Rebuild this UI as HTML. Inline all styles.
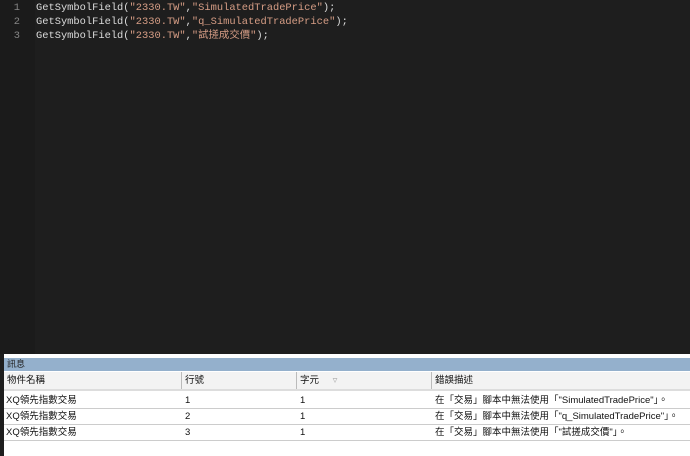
<!DOCTYPE html><html><head><meta charset="utf-8"><style>
body{margin:0;width:690px;height:456px;overflow:hidden;background:#1e1e1e;position:relative;font-family:"Liberation Sans","Noto Sans CJK TC",sans-serif}
.gut{position:absolute;left:0;top:0;width:35px;height:354px;background:#1b1b1b}
.code{position:absolute;left:0;top:1px;font:10.4px/14px "Liberation Mono","Noto Sans CJK TC",monospace;color:#dcdcdc}
.ln{display:inline-block;width:20px;text-align:right;color:#858585;margin-right:16px}
.s{color:#d69d85}
.panel{position:absolute;left:4px;top:354px;width:686px;height:102px;background:#fff}
.title{position:absolute;left:0;top:4px;width:686px;height:13px;background:#94b0cc;font-size:9px;line-height:13px;color:#222;padding-left:3px}
.row{position:absolute;left:0;width:686px;height:15px;font-size:9.5px;line-height:15px;color:#111;border-bottom:1px solid #ccc}
.row span{position:absolute;top:0}
.hd{background:#f3f3f3;height:17px;line-height:17px;border-bottom:2px solid #ddd}
.hd span{border-left:1px solid #bbb;padding-left:3px}
</style></head><body>
<div class="gut"></div>
<div class="code">
<div><span class="ln">1</span>GetSymbolField(<span class="s">"2330.TW"</span>,<span class="s">"SimulatedTradePrice"</span>);</div>
<div><span class="ln">2</span>GetSymbolField(<span class="s">"2330.TW"</span>,<span class="s">"q_SimulatedTradePrice"</span>);</div>
<div><span class="ln">3</span>GetSymbolField(<span class="s">"2330.TW"</span>,<span class="s">"試搓成交價"</span>);</div>
</div>
<div class="panel">
<div class="title">訊息</div>
<div class="row hd" style="top:18px"><span style="left:0;border:0">物件名稱</span><span style="left:177px">行號</span><span style="left:292px">字元 <span style="position:static;color:#aaa;border:0;margin-left:8px">▿</span></span><span style="left:427px">錯誤描述</span></div>
<div class="row" style="top:39px"><span style="left:2px">XQ領先指數交易</span><span style="left:181px">1</span><span style="left:296px">1</span><span style="left:431px">在「交易」腳本中無法使用「"SimulatedTradePrice"」。</span></div>
<div class="row" style="top:55px"><span style="left:2px">XQ領先指數交易</span><span style="left:181px">2</span><span style="left:296px">1</span><span style="left:431px">在「交易」腳本中無法使用「"q_SimulatedTradePrice"」。</span></div>
<div class="row" style="top:71px"><span style="left:2px">XQ領先指數交易</span><span style="left:181px">3</span><span style="left:296px">1</span><span style="left:431px">在「交易」腳本中無法使用「"試搓成交價"」。</span></div>
</div>
</body></html>
